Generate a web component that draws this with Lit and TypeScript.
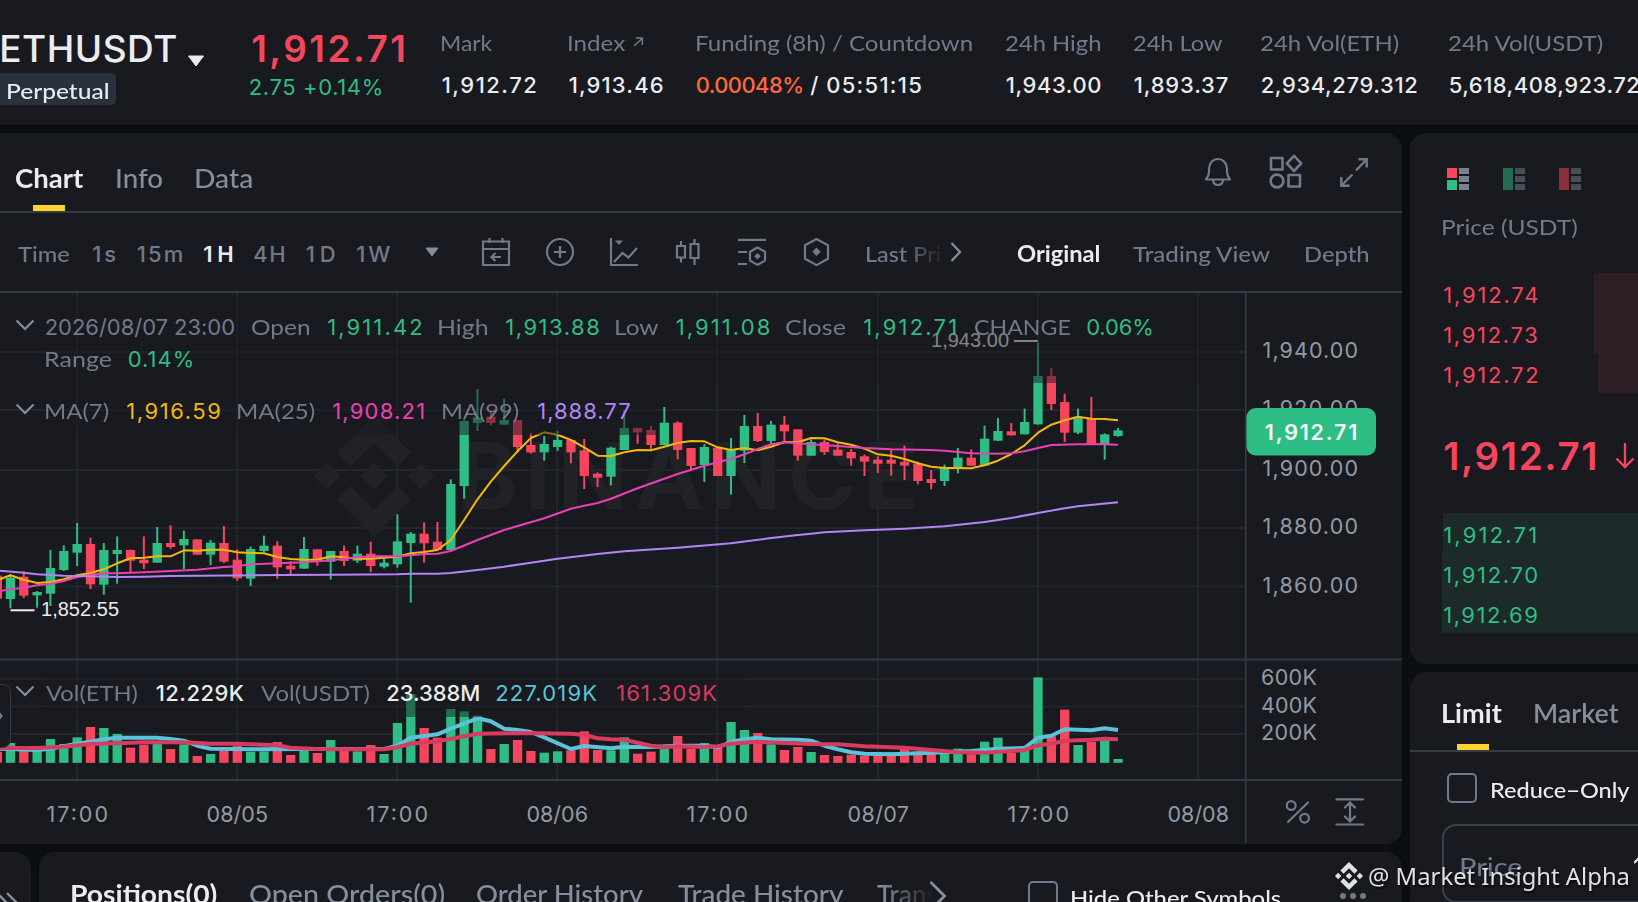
import { LitElement, html, svg, css } from "lit";
import { customElement, property } from "lit/decorators.js";

const GREEN = "#2ebd85";
const RED = "#f6465d";

/* ---------- market data, in plot units (3 units = 1px) ---------- */
type Candle = [string, number, number, number, number, number]; // side, high, low, top, bottom, volume top
const candles: Candle[] = [
  ["g", 852, 955, 863, 927, 279], ["r", 843, 924, 860, 917, 303], ["g", 903, 953, 906, 916, 303],
  ["g", 780, 948, 834, 911, 267], ["g", 766, 843, 783, 840, 282], ["g", 699, 828, 762, 788, 262],
  ["r", 743, 897, 762, 883, 231], ["g", 759, 914, 780, 884, 234], ["g", 739, 881, 780, 792, 252],
  ["r", 778, 846, 780, 812, 293], ["r", 739, 837, 809, 820, 284], ["g", 711, 818, 759, 818, 281],
  ["r", 706, 776, 759, 771, 297], ["g", 722, 837, 747, 766, 283], ["r", 748, 794, 748, 794, 318],
  ["g", 750, 825, 758, 794, 312], ["r", 708, 819, 759, 815, 303], ["r", 778, 872, 809, 865, 287],
  ["g", 770, 888, 777, 866, 305], ["g", 737, 787, 767, 783, 304], ["r", 754, 866, 767, 832, 276],
  ["r", 813, 853, 827, 838, 315], ["g", 741, 836, 777, 836, 302], ["r", 778, 827, 778, 812, 309],
  ["g", 783, 869, 783, 815, 270], ["r", 767, 828, 783, 813, 303], ["g", 767, 819, 791, 812, 304],
  ["r", 755, 846, 791, 828, 285], ["g", 805, 835, 818, 830, 312], ["g", 673, 833, 754, 823, 219],
  ["g", 726, 938, 731, 759, 132], ["r", 697, 818, 731, 760, 234], ["r", 696, 780, 755, 780, 263],
  ["g", 568, 780, 582, 780, 177], ["g", 388, 626, 393, 588, 184], ["g", 297, 423, 382, 399, 197],
  ["r", 362, 406, 380, 399, 297], ["g", 326, 404, 390, 404, 282], ["r", 390, 488, 390, 471, 270],
  ["r", 428, 491, 465, 487, 303], ["g", 438, 512, 462, 487, 308], ["g", 422, 483, 450, 471, 304],
  ["r", 450, 520, 450, 487, 301], ["r", 447, 597, 481, 558, 244], ["r", 547, 591, 551, 563, 300],
  ["g", 470, 586, 473, 560, 301], ["g", 362, 480, 414, 480, 262], ["r", 413, 461, 414, 427, 311],
  ["r", 408, 482, 420, 465, 305], ["g", 351, 466, 398, 465, 296], ["r", 394, 508, 398, 480, 258],
  ["r", 474, 540, 474, 528, 296], ["g", 462, 576, 471, 525, 279], ["r", 473, 558, 473, 558, 294],
  ["g", 444, 614, 478, 558, 216], ["g", 375, 519, 408, 482, 240], ["r", 369, 456, 408, 453, 249],
  ["g", 393, 465, 404, 453, 283], ["r", 378, 456, 404, 424, 300], ["r", 418, 512, 418, 497, 291],
  ["g", 448, 497, 456, 497, 306], ["r", 449, 495, 456, 486, 315], ["r", 460, 497, 479, 497, 318],
  ["r", 477, 527, 486, 505, 314], ["r", 494, 558, 499, 515, 317], ["r", 499, 549, 509, 521, 317],
  ["r", 479, 557, 509, 521, 307], ["r", 467, 570, 515, 527, 296], ["r", 515, 583, 521, 573, 305],
  ["r", 540, 598, 567, 579, 312], ["g", 524, 588, 531, 573, 311], ["g", 474, 550, 503, 533, 296],
  ["r", 478, 527, 503, 527, 313], ["g", 407, 527, 446, 527, 275], ["g", 384, 453, 423, 452, 263],
  ["r", 399, 437, 424, 436, 309], ["g", 356, 433, 396, 433, 288], ["g", 158, 404, 258, 403, 82],
  ["r", 234, 360, 258, 342, 259], ["r", 311, 456, 336, 428, 179], ["g", 356, 432, 384, 428, 285],
  ["r", 321, 463, 387, 463, 276], ["g", 430, 509, 433, 462, 273], ["g", 414, 440, 421, 438, 327],
];
type Pts = number[][];
const ma7: Pts = [868, 856, 869, 879, 876, 868, 856, 849, 838, 820, 805, 803, 799, 799, 781, 782, 779, 779, 787, 789, 790, 801, 807, 809, 809, 799, 802, 806, 806, 803, 800, 790, 786, 780, 750, 690, 628, 575, 528, 484, 444, 427, 434, 450, 472, 497, 498, 487, 480, 481, 470, 459, 453, 454, 472, 480, 474, 481, 470, 456, 457, 444, 445, 457, 464, 476, 493, 497, 507, 520, 530, 534, 534, 535, 526, 512, 492, 466, 428, 404, 391, 380, 386, 387, 391].map((y, i) => [i === 0 ? -0.8 : i - 1, y]);
const ma25: Pts = [[-0.8, 903], [0, 898], [1, 893], [2, 886], [3, 881], [4, 873], [5, 861], [6, 855], [7, 850], [8, 850], [10, 847], [12, 843], [14, 839], [16, 831], [17, 829], [18, 823], [20, 820], [22, 817], [24, 811], [26, 802], [27, 799], [29, 799], [30, 796], [31, 792], [32, 791], [33, 783], [35, 750], [37, 720], [40, 685], [42, 656], [43, 647], [44, 639], [45, 626], [47, 595], [50, 552], [52, 527], [53, 517], [54, 507], [55, 493], [56, 477], [57, 463], [58, 457], [59, 460], [60, 463], [62, 468], [64, 474], [66, 478], [69, 480], [70, 482], [71, 486], [72, 490], [74, 491], [75, 490], [76, 484], [77, 474], [78, 465], [80, 463], [82, 463], [83, 464]];
const ma99: Pts = [[-0.8, 842], [1, 848], [2, 853], [4, 857], [6, 859], [8, 861], [10, 860], [12, 858], [20, 855], [24, 854], [29, 853], [30, 851], [32, 851], [33, 849], [35, 840], [37, 830], [39, 818], [41, 806], [44, 792], [46, 784], [50, 773], [54, 760], [57, 744], [59, 735], [60, 731], [61, 727], [64, 721], [67, 716], [70, 709], [73, 696], [75, 684], [77, 669], [79, 655], [80, 649], [83, 637]];
const volFast: Pts = [[-0.8, 296], [2, 300], [3, 296], [4, 289], [5, 281], [6, 275], [7, 268], [8, 263], [11, 263], [12, 267], [13, 272], [14, 287], [15, 296], [17, 297], [18, 298], [22, 297], [24, 297], [28, 297], [29, 287], [30, 263], [32, 253], [33, 236], [35, 205], [36, 214], [37, 236], [38, 240], [39, 246], [40, 262], [42, 297], [43, 288], [45, 295], [46, 290], [48, 291], [50, 287], [52, 287], [53, 292], [54, 276], [55, 268], [56, 263], [57, 268], [59, 269], [60, 272], [61, 287], [62, 298], [63, 307], [64, 311], [66, 313], [68, 310], [70, 307], [72, 303], [74, 296], [76, 294], [77, 263], [78, 257], [79, 238], [81, 241], [82, 235], [83, 240]];
const volSlow: Pts = [[-0.8, 294], [2, 294], [4, 290], [6, 282], [8, 280], [10, 277], [13, 277], [15, 281], [17, 281], [19, 284], [20, 286], [21, 293], [23, 297], [25, 298], [28, 298], [29, 292], [30, 281], [32, 274], [33, 267], [34, 259], [35, 251], [38, 249], [42, 251], [43, 255], [44, 265], [45, 268], [46, 269], [47, 278], [48, 287], [49, 292], [50, 289], [52, 291], [53, 289], [54, 281], [56, 275], [58, 279], [60, 282], [62, 283], [64, 289], [67, 293], [69, 300], [71, 307], [73, 308], [75, 303], [76, 300], [77, 286], [78, 281], [79, 272], [81, 269], [82, 266], [83, 268]];

const cx = (i: number) => 10.4 + i * 13.345;
const py = (v: number) => 290 + v / 3;
const vy = (v: number) => 650 + v / 3;
const line = (p: Pts, f: (v: number) => number) =>
  p.map(([i, v]) => `${cx(i).toFixed(1)},${f(v).toFixed(1)}`).join(" ");

const LOGO = "M38.73 53.2L63.31 28.62 87.9 53.21l14.3-14.3L63.31 0 24.43 38.88ZM0 63.31L14.3 49l14.3 14.3-14.3 14.3ZM38.73 73.41L63.31 98 87.9 73.4l14.31 14.29L63.31 126.61 24.43 87.75ZM98 63.31l14.3-14.3 14.3 14.3-14.3 14.3ZM77.83 63.3L63.31 48.78 48.79 63.3 63.31 77.83Z";

/* One line of text whose ink spans a given width: figures are tracked, words are widened. */
@customElement("fit-label")
export class FitLabel extends LitElement {
  @property() text = "";
  @property({ type: Number }) w = 0;
  static styles = css`
    :host { display: block; white-space: pre; flex: none; }
    span { display: block; width: 0; transform-origin: 0 50%; }
  `;
  updated() {
    const ctx = document.createElement("canvas").getContext("2d")!;
    const cs = getComputedStyle(this);
    ctx.font = `${cs.fontWeight} ${cs.fontSize} ${cs.fontFamily}`;
    const m = ctx.measureText(this.text);
    const ink = m.actualBoundingBoxLeft + m.actualBoundingBoxRight;
    const s = this.renderRoot.querySelector("span")!;
    if (cs.fontFamily.startsWith("Inter")) {
      const track = (this.w - ink) / Math.max(1, this.text.length - 1);
      s.style.letterSpacing = `${track.toFixed(3)}px`;
      s.style.marginLeft = `${(m.actualBoundingBoxLeft + 0.7).toFixed(2)}px`;
    } else {
      const k = this.w / ink;
      s.style.transform = `scaleX(${k.toFixed(4)})`;
      s.style.marginLeft = `${(m.actualBoundingBoxLeft * k + 0.5).toFixed(2)}px`;
    }
    this.style.width = `${this.w}px`;
  }
  render() {
    return html`<span>${this.text}</span>`;
  }
}
const fl = (text: string, w: number, cls = "") =>
  html`<fit-label class=${cls} .text=${text} .w=${w}></fit-label>`;

@customElement("price-chart")
export class PriceChart extends LitElement {
  static styles = css`
    :host { display: block; position: relative; height: 551px; }
    svg { display: block; }
    .axis { font: 400 21.5px Inter, sans-serif; fill: #929aa5; }
    .mark { font: 400 20px "Liberation Sans", sans-serif; fill: #eaecef; }
    .last { font: 600 21.5px Inter, sans-serif; fill: #f4fbf8; }
    .wm { font: 700 92px Inter, sans-serif; fill: #222327; }
    .legend {
      position: absolute; left: 45px; display: flex; align-items: center;
      font: 400 22px/22px Lato, sans-serif; color: #707a8a;
      background: rgba(25, 26, 31, 0.5);
    }
    .ohlc { top: 6px; height: 84px; width: 1194px; display: grid; row-gap: 10px; align-content: start; padding-top: 17px; box-sizing: border-box; }
    .row { display: flex; }
    .row.in { padding-left: 1px; }
    .ma { top: 90px; height: 52px; width: 611px; box-sizing: border-box; padding-top: 3px; }
    .vol { top: 384px; height: 40px; width: 700px; padding-bottom: 8px; box-sizing: border-box; }
    .n { font-family: Inter, sans-serif; }
    .up { color: #2ebd85; }
    .yl { color: #f0b90b; }
    .pk { color: #eb40b5; }
    .pu { color: #b385f8; }
    .wh { color: #eaecef; font-weight: 500; }
    .cy { color: #5ac3d9; }
    .rd { color: #d93a5f; }
    .g16 { margin-left: 17px; } .g18 { margin-left: 18.5px; } .g20 { margin-left: 20px; }
    .handle { position: absolute; left: -12px; top: 391px; width: 21px; height: 62px; border: 1.5px solid #333b47; border-radius: 8px; background: #191a1f; }
    .marks, .grip { position: absolute; left: 0; top: 0; }
    .grip { top: 418px; }
  `;
  render() {
    const gx = [77, 237, 397, 557, 717, 878, 1038, 1198];
    const times = ["17:00", "08/05", "17:00", "08/06", "17:00", "08/07", "17:00", "08/08"];
    const prices: [string, number][] = [["1,940.00", 350], ["1,920.00", 408], ["1,900.00", 468], ["1,880.00", 526], ["1,860.00", 585]];
    const vols: [string, number][] = [["600K", 677], ["400K", 705], ["200K", 732]];
    return html`
      <svg width="1402" height="551" viewBox="0 293 1402 551">
        <g stroke="#20262c" stroke-width="2">
          ${gx.map((x) => svg`<path d="M${x} 293V779"/>`)}
          ${[352, 410, 470, 528, 586.5, 679, 706.5, 734].map((y) => svg`<path d="M0 ${y}H1244"/>`)}
        </g>
        <g opacity="0.9">
          <path fill="#222327" transform="translate(313.4 415.6) scale(0.957)" d=${LOGO}></path>
          <text class="wm" x="457" y="509" textLength="462" lengthAdjust="spacing">BINANCE</text>
        </g>
        <g fill="none" stroke="#333b47" stroke-width="2">
          <path d="M0 659.5H1402" stroke="#2b333e" stroke-width="2.6" />
          <path d="M0 780H1402" />
          <path d="M1245.7 293V843" stroke-width="1.6" />
        </g>
        <rect x="0" y=${py(857)} width="2" height="23" fill=${RED}></rect>
        <rect x="0" y=${vy(305)} width="2" height="11" fill=${RED}></rect>
        ${candles.map(([c, h, l, t, b, v], i) => {
          const f = c === "g" ? GREEN : RED;
          return svg`<rect x=${cx(i) - 1} y=${py(h)} width="2" height=${(l - h) / 3} fill=${f}/>
            <rect x=${cx(i) - 4.6} y=${py(t)} width="9.3" height=${(b - t) / 3} fill=${f}/>
            <rect x=${cx(i) - 4.6} y=${vy(v)} width="9.3" height=${(338.5 - v) / 3} fill=${f}/>`;
        })}
        <g fill="none" stroke-linejoin="round">
          <polyline points=${line(ma7, py)} stroke="#f0b90b" stroke-width="2" />
          <polyline points=${line(ma25, py)} stroke="#eb40b5" stroke-width="2" />
          <polyline points=${line(ma99, py)} stroke="#b385f8" stroke-width="2" />
          <polyline points=${line(volFast, vy)} stroke="#5ac3d9" stroke-width="4" />
          <polyline points=${line(volSlow, vy)} stroke="#d93a5f" stroke-width="4" />
        </g>
        <path d="M10.5 610.3H34.5" stroke="#eaecef" stroke-width="2" />
        <text class="mark" x="41" y="615.7" textLength="78">1,852.55</text>
        <path d="M1014 341H1038" stroke="#eaecef" stroke-width="2" />
        <text class="mark" x="931" y="346.7" textLength="78">1,943.00</text>
        ${times.map((t, i) => svg`<text class="axis" x=${gx[i] - 30.5} y="821.8" textLength="61.5">${t}</text>`)}
        ${prices.map(([t, y]) => svg`<text class="axis" x="1262.6" y=${y + 7.8} textLength="95.5">${t}</text>`)}
        ${vols.map(([t, y]) => svg`<text class="axis" x="1261" y=${y + 7.8} textLength="56">${t}</text>`)}
        <rect x="1246.5" y="408" width="129.5" height="47.5" rx="9" fill=${GREEN}></rect>
        <text class="last" x="1264.8" y="439.8" textLength="92.5">1,912.71</text>
        <g fill="none" stroke="#707a8a" stroke-width="2.2" stroke-linecap="round">
          <circle cx="1291.2" cy="805.5" r="4.4" /><circle cx="1304.6" cy="818.2" r="4.4" /><path d="M1308 802.5L1288 822" />
          <path d="M1336.5 799.3H1363M1336.5 824.5H1363M1350 803.5V820.5M1345 807.5l5-5 5 5M1345 816.5l5 5 5-5" />
        </g>
      </svg>
      <div class="legend ohlc">
        <div class="row">
          ${fl("2026/08/07 23:00", 188.5, "n")}${fl("Open", 57, "g18")}${fl("1,911.42", 93, "n up g18")}
          ${fl("High", 48, "g18")}${fl("1,913.88", 93, "n up g18")}${fl("Low", 42, "g16")}
          ${fl("1,911.08", 93, "n up g18")}${fl("Close", 59, "g16")}${fl("1,912.71", 91, "n up g18")}
          ${fl("CHANGE", 95, "g20")}${fl("0.06%", 65, "n up g16")}
        </div>
        <div class="row in">${fl("Range", 65)}${fl("0.14%", 64, "n up g16")}</div>
      </div>
      <div class="legend ma"><div class="row in">
        ${fl("MA(7)", 62)}${fl("1,916.59", 93, "n yl g18")}${fl("MA(25)", 76, "g18")}${fl("1,908.21", 90, "n pk g18")}
        ${fl("MA(99)", 75, "g20")}${fl("1,888.77", 92, "n pu g20")}
      </div></div>
      <div class="legend vol"><div class="row">
        ${fl("Vol(ETH)", 91)}${fl("12.229K", 87, "n wh g20")}${fl("Vol(USDT)", 108, "g16")}${fl("23.388M", 92, "n wh g18")}
        ${fl("227.019K", 101, "n cy g16")}${fl("161.309K", 100, "n rd g20")}
      </div></div>
      <svg class="marks" width="44" height="480" viewBox="0 0 44 480" fill="none" stroke="#848e9c" stroke-width="2.2">
        <path d="M16.5 27.5l8.5 8.5L33.5 27.5M16.5 111.5l8.5 8.5L33.5 111.5M16.5 393.5l8.5 8.5L33.5 393.5" />
      </svg>
      <div class="handle"></div>
      <svg class="grip" width="4" height="10" viewBox="0 0 4 10"><path d="M0 1.5L3 5 0 8.5Z" fill="#707a8a" /></svg>
    `;
  }
}

@customElement("app-root")
export class AppRoot extends LitElement {
  static styles = css`
    :host { display: flex; flex-direction: column; gap: 8px; position: relative; width: 1638px; height: 902px; overflow: hidden;
      background: #0b0e11; color: #eaecef; font: 400 22px/22px Lato, sans-serif; }
    svg { display: block; flex: none; }
    .n { font-family: Inter, sans-serif; }
    .panel { background: #191a1f; }
    .grey { color: #707a8a; }
    .red { color: #f6465d; }
    .green { color: #2ebd85; }
    .org { color: #ff693d; }

    header { flex: none; height: 125px; display: grid;
      grid-template-columns: 249px 193px 127px 128px 309px 128px 127px 188px 189px; }
    .stat { display: grid; align-content: start; gap: 20px; padding-top: 31.5px; }
    .stat .n { font-weight: 500; }
    .stat .v { display: flex; }
    .stat .org { margin-left: -1px; }
    .stat .idx { display: flex; gap: 8px; }
    .stat .slash { margin: 0 10px 0 8px; }
    .pair { padding-top: 30px; }
    .symbol { display: flex; gap: 11px; align-items: flex-start; height: 43px; }
    .symbol fit-label { font: 500 37px/37px Inter, sans-serif; margin-left: 0.5px; }
    .symbol svg { margin-top: 25px; }
    .badge { width: 116px; height: 32px; box-sizing: border-box; padding: 7px 0 0 7px; background: #29313d; border-radius: 0 5px 5px 0; font-weight: 500; }
    .last { padding-top: 30px; display: grid; align-content: start; gap: 9px; }
    .last .big { font: 600 37px/37px Inter, sans-serif; margin-left: 2.5px; }

    main { flex: 1; display: grid; grid-template-columns: 1402px 228px; gap: 8px; min-height: 0; }
    .left, .right { display: flex; flex-direction: column; gap: 8px; min-height: 0; }
    .chart { border-radius: 0 16px 16px 0; height: 711px; overflow: hidden; flex: none; }
    .tabs { height: 78px; border-bottom: 2px solid #333b47; display: flex; font: 500 26px/26px Lato, sans-serif; color: #848e9c; padding-left: 15.5px; }
    .tab { display: flex; flex-direction: column; padding-top: 32px; justify-content: space-between; margin-right: 34px; }
    .on { color: #eaecef; font-weight: 700; }
    .bar { width: 32px; height: 6px; background: #fcd535; align-self: center; }
    .tools { display: flex; margin-left: auto; padding: 21px 34px 0 0; gap: 37px; }
    .bar2 { height: 78px; border-bottom: 2px solid #333b47; display: flex; align-items: center; color: #707a8a; padding-left: 17px; font-weight: 500; }
    .iv { display: flex; gap: 22.5px; margin-top: 3px; }
    .iv fit-label:first-child { margin-right: 2px; }
    .iv .act { color: #eaecef; font-weight: 600; margin-right: -0.5px; }
    .icons { display: flex; margin-left: 35.5px; align-items: center; }
    .icons .draw { margin-left: 42px; }
    .icons .conf { margin-left: 22px; }
    .lastpri { margin: 3px 0 0 36px; width: 76px; overflow: hidden;
      -webkit-mask-image: linear-gradient(90deg, #000 52%, transparent 104%); mask-image: linear-gradient(90deg, #000 52%, transparent 104%); }
    .more { margin-left: 8px; }
    .views { display: flex; margin: 3px 0 0 54.5px; gap: 33.3px; }

    .bottom { flex: 1; display: flex; gap: 8px; min-height: 0; }
    .stub { width: 31px; border-radius: 0 16px 0 0; overflow: hidden; padding-top: 40px; box-sizing: border-box; }
    .orders { flex: 1; border-radius: 16px 16px 0 0; padding: 29px 0 0 33px; display: flex; align-items: flex-start; font: 500 26px/26px Lato, sans-serif; color: #848e9c; overflow: hidden; }
    .orders > .t { margin-right: 33px; }
    .orders .next { margin-left: -5px; }
    .trans { width: 58px; overflow: hidden; -webkit-mask-image: linear-gradient(90deg, #000 10%, transparent 100%); mask-image: linear-gradient(90deg, #000 10%, transparent 100%); }
    .box { box-sizing: border-box; width: 30px; height: 30px; border: 2px solid #707a8a; border-radius: 5px; flex: none; }
    .hide { display: flex; color: #eaecef; font: 500 22px/22px Lato, sans-serif; margin-left: 81px; gap: 13px; }
    .hide fit-label { margin-top: 5.5px; }
    .dots { margin: 11px 0 0 58px; }

    .book { height: 531px; flex: none; border-radius: 16px 0 0 16px; overflow: hidden; }
    .modes { display: flex; gap: 34px; padding: 35px 0 0 37px; }
    .head { margin: 26px 0 0 32.5px; }
    .list { display: grid; grid-auto-rows: 40px; }
    .asks { margin-top: 35px; }
    .lv { display: flex; align-items: center; justify-content: space-between; padding-left: 33.5px; }
    .lv fit-label { padding-top: 4px; }
    .lv .depth { height: 40px; background: #2e1f26; width: 44px; }
    .lv .d2 { width: 40px; }
    .mid-row { height: 120px; display: flex; align-items: center; padding-left: 33.5px; gap: 20px; padding-top: 6px; box-sizing: border-box; }
    .mid-row fit-label { font: 600 38.5px/38px Inter, sans-serif; }
    .bids .lv { margin-left: 32px; padding-left: 1.5px; background: #1c2a2a; }
    .bids .lv:first-child { margin-left: 33px; padding-left: 0.5px; }

    .trade { flex: 1; border-radius: 16px 0 0 0; min-height: 0; overflow: hidden; }
    .ttabs { height: 78px; border-bottom: 2px solid #333b47; display: flex; gap: 33px; padding-left: 33px; font: 600 26px/26px Lato, sans-serif; color: #848e9c; }
    .ttab { display: flex; flex-direction: column; justify-content: space-between; padding-top: 28px; }
    .reduce { display: flex; align-items: center; gap: 14px; padding: 21px 0 0 37px; font-weight: 500; }
    .reduce fit-label { padding-top: 3px; }
    .input { margin: 21px 0 0 32px; width: 230px; height: 79px; border: 2px solid #3a414c; border-radius: 14px; box-sizing: border-box; padding: 29px 0 0 17px; font-size: 25px; display: flex; gap: 112px; }
    .wm { position: absolute; left: 1335px; top: 862px; display: flex; gap: 6px; align-items: center; color: #dfe1e3;
      font: 400 23px/28px "Noto Sans", sans-serif; text-shadow: 1px 2px 2px rgba(0, 0, 0, 0.7); }
  `;

  private stat(label: string, lw: number, value: string, vw: number) {
    return html`<div class="stat">${fl(label, lw, "grey")}${fl(value, vw, "n")}</div>`;
  }
  private mode(a: string, b: string, o: number) {
    return html`<svg width="22" height="22" viewBox="0 0 22 22" opacity=${o}>
      ${a === b
        ? svg`<rect width="10" height="22" fill=${a}/>`
        : svg`<rect width="10" height="10" fill=${a}/><rect y="12" width="10" height="10" fill=${b}/>`}
      <path d="M12 0h10v6H12zM12 8h10v6H12zM12 16h10v6H12z" fill="#788291" />
    </svg>`;
  }

  render() {
    return html`
      <header class="panel">
        <div class="pair">
          <div class="symbol">${fl("ETHUSDT", 175)}<svg width="18" height="12" viewBox="0 0 18 12"><path d="M1.5 1h15L9 11Z" fill="#eaecef" stroke="#eaecef" stroke-linejoin="round" /></svg></div>
          <div class="badge">${fl("Perpetual", 101)}</div>
        </div>
        <div class="last">${fl("1,912.71", 151, "big red")}${fl("2.75 +0.14%", 132, "n green")}</div>
        ${this.stat("Mark", 51, "1,912.72", 93.5)}
        <div class="stat">
          <div class="idx">${fl("Index", 56, "grey")}<svg width="11" height="22" viewBox="0 0 11 22" fill="none" stroke="#707a8a" stroke-width="1.5"><path d="M1 14L9 6.5M3 6H9.3V13" /></svg></div>
          ${fl("1,913.46", 93, "n")}
        </div>
        <div class="stat">
          ${fl("Funding (8h) / Countdown", 274.5, "grey")}
          <div class="v">${fl("0.00048%", 105.5, "n org")}${fl("/", 7, "n slash")}${fl("05:51:15", 94, "n")}</div>
        </div>
        ${this.stat("24h High", 94, "1,943.00", 93.5)}
        ${this.stat("24h Low", 88, "1,893.37", 93)}
        ${this.stat("24h Vol(ETH)", 138, "2,934,279.312", 155.5)}
        ${this.stat("24h Vol(USDT)", 154, "5,618,408,923.72", 189.5)}
      </header>
      <main>
        <div class="left">
          <section class="chart panel">
            <div class="tabs">
              <div class="tab on">${fl("Chart", 67.5)}<div class="bar"></div></div>
              <div class="tab">${fl("Info", 45)}</div>
              <div class="tab">${fl("Data", 56)}</div>
              <div class="tools">
                <svg width="28" height="36" viewBox="0 0 28 36" fill="none" stroke="#707a8a" stroke-width="2.2" stroke-linejoin="round">
                  <path d="M2 25.5C4 23 5 21 5 18V14.5a9 9.5 0 0 1 18 0V18c0 3 1 5 3 7.5ZM9 26.5c1 6 9 6 10 0" />
                </svg>
                <svg width="34" height="36" viewBox="0 0 34 36" fill="none" stroke="#707a8a" stroke-width="2.6" stroke-linejoin="round">
                  <rect x="2" y="4" width="11.5" height="11.5" /><path d="M25 1.8l7.2 7.6-7.2 7.6-7.2-7.6Z" /><circle cx="8" cy="27" r="6.4" /><rect x="19.5" y="21" width="11.5" height="11.5" />
                </svg>
                <svg width="28" height="36" viewBox="0 0 28 36" fill="none" stroke="#707a8a" stroke-width="2.4">
                  <path d="M16 16.5L26 6M18.5 5.3H26.7V13.5M12.5 20.5L2 31M1.3 23V31.7H9.5" />
                </svg>
              </div>
            </div>
            <div class="bar2">
              <div class="iv">
                ${fl("Time", 51)}${fl("1s", 22, "n")}${fl("15m", 44, "n")}${fl("1H", 28, "n act")}${fl("4H", 30, "n")}${fl("1D", 28, "n")}${fl("1W", 33, "n")}
              </div>
              <div class="icons">
                <svg width="14" height="10" viewBox="0 0 14 10"><path d="M1 1h12L7 9Z" fill="#848e9c" stroke="#848e9c" stroke-linejoin="round" /></svg>
                <svg class="draw" width="235" height="30" viewBox="481 237 235 30" fill="none" stroke="#707a8a" stroke-width="2.2">
                  <path d="M483 241.5H509V265H483ZM483 249H509M489.5 238v5M502.5 238v5M501 257H491.5M495.5 253l-4 4 4 4" />
                  <circle cx="560" cy="252" r="13" /><path d="M560 246v12M554 252h12" />
                  <path d="M611 238V265H638M614 262l8.5-9 6 4.5 8.5-9.5" /><path d="M615 240.5h8l-4 4.5Z" fill="#707a8a" stroke="none" />
                  <path d="M677 246h8v11.5h-8ZM681 241v5M681 257.5v5M690.5 244h8v14h-8ZM694.5 239v5M694.5 258v7" />
                </svg>
                <svg class="conf" width="92" height="30" viewBox="738 237 92 30" fill="none" stroke="#707a8a" stroke-width="2.2" stroke-linejoin="round">
                  <path d="M738 239.8H766M738 252H747M738 264H747M757.5 247.5l7.5 4.3v8.8l-7.5 4.3-7.5-4.3v-8.8Z" />
                  <path d="M757.5 253l3.2 3.2-3.2 3.2-3.2-3.2ZM816.5 247.5l4.2 4.3-4.2 4.3-4.2-4.3Z" fill="#707a8a" stroke="none" />
                  <path d="M816.5 239l11.5 6.3v13.5l-11.5 6.3-11.5-6.3v-13.5Z" />
                </svg>
              </div>
              <div class="lastpri">${fl("Last Price", 98)}</div>
              <svg class="more" width="12" height="22" viewBox="0 0 12 22" fill="none" stroke="#848e9c" stroke-width="2.3"><path d="M1.5 2L10 11 1.5 20" /></svg>
              <div class="views">${fl("Original", 83, "on")}${fl("Trading View", 138.5)}${fl("Depth", 63)}</div>
            </div>
            <price-chart></price-chart>
          </section>
          <div class="bottom">
            <div class="stub panel"><svg width="20" height="20" viewBox="0 0 20 20" fill="none" stroke="#848e9c" stroke-width="2.4"><path d="M-3 1L6 10l-9 9M7 1l9 9-9 9" /></svg></div>
            <div class="orders panel">
              ${fl("Positions(0)", 145, "t on")}${fl("Open Orders(0)", 194, "t")}${fl("Order History", 167, "t")}${fl("Trade History", 166, "t")}
              <div class="trans">${fl("Transaction", 130)}</div>
              <svg class="next" width="18" height="32" viewBox="0 0 18 32" fill="none" stroke="#848e9c" stroke-width="2.8"><path d="M1.5 1L15.5 15 1.5 29" /></svg>
              <div class="hide"><div class="box"></div>${fl("Hide Other Symbols", 210)}</div>
              <svg class="dots" width="28" height="8" viewBox="0 0 28 8" fill="#707a8a"><circle cx="4" cy="4" r="3" /><circle cx="14" cy="4" r="3" /><circle cx="24" cy="4" r="3" /></svg>
            </div>
          </div>
        </div>
        <div class="right">
          <section class="book panel">
            <div class="modes">${this.mode(RED, GREEN, 1)}${this.mode(GREEN, GREEN, 0.5)}${this.mode(RED, RED, 0.5)}</div>
            <div class="head grey">${fl("Price (USDT)", 133.5)}</div>
            <div class="list asks red n">
              <div class="lv">${fl("1,912.74", 93)}<div class="depth"></div></div>
              <div class="lv">${fl("1,912.73", 93)}<div class="depth"></div></div>
              <div class="lv">${fl("1,912.72", 93)}<div class="depth d2"></div></div>
            </div>
            <div class="mid-row red">${fl("1,912.71", 151)}
              <svg width="20" height="26" viewBox="0 0 20 26" fill="none" stroke="#f6465d" stroke-width="2.3"><path d="M10 0V24M1.5 15.5L10 24l8.5-8.5" /></svg>
            </div>
            <div class="list bids green n">
              <div class="lv">${fl("1,912.71", 91)}</div>
              <div class="lv">${fl("1,912.70", 93)}</div>
              <div class="lv">${fl("1,912.69", 93)}</div>
            </div>
          </section>
          <section class="trade panel">
            <div class="ttabs">
              <div class="ttab on">${fl("Limit", 59)}<div class="bar"></div></div>
              <div class="ttab">${fl("Market", 84)}</div>
            </div>
            <div class="reduce"><div class="box"></div>${fl("Reduce−Only", 139)}</div>
            <div class="input grey">${fl("Price", 61)}<svg width="12" height="10" viewBox="0 0 12 10" fill="none" stroke="#eaecef" stroke-width="2"><path d="M0 8L6 2l6 6" /></svg></div>
          </section>
        </div>
      </main>
      <div class="wm">
        <svg width="28" height="28" viewBox="0 0 126.61 126.61"><path d=${LOGO} fill="#dfe1e3"></path></svg>
        ${fl("@ Market Insight Alpha", 260)}
      </div>
    `;
  }
}
